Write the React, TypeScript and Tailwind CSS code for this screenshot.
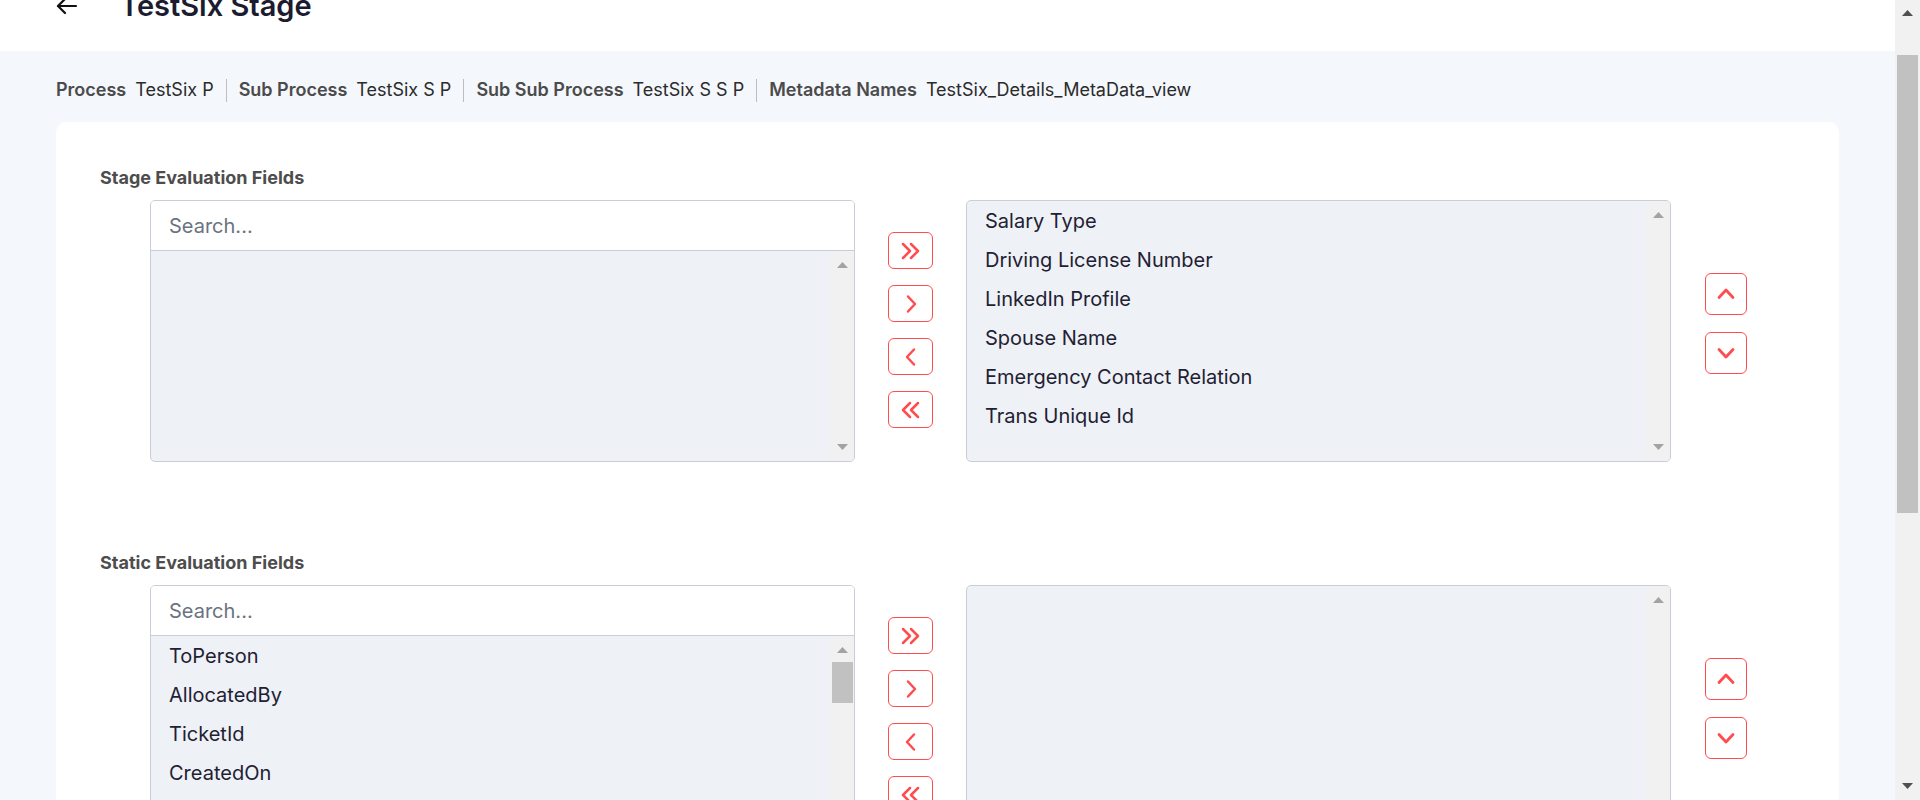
import { useState } from 'react'

const STAGE_SELECTED = [
  'Salary Type',
  'Driving License Number',
  'LinkedIn Profile',
  'Spouse Name',
  'Emergency Contact Relation',
  'Trans Unique Id',
]

const STATIC_AVAILABLE = ['ToPerson', 'AllocatedBy', 'TicketId', 'CreatedOn', 'ModifiedOn', 'Status']

const BREADCRUMB = [
  { label: 'Process', value: 'TestSix P' },
  { label: 'Sub Process', value: 'TestSix S P' },
  { label: 'Sub Sub Process', value: 'TestSix S S P' },
  { label: 'Metadata Names', value: 'TestSix_Details_MetaData_view' },
]

function Triangle({ up, dark }: { up?: boolean; dark?: boolean }) {
  return (
    <svg width="11" height="6" viewBox="0 0 11 6" className="shrink-0">
      <polygon points={up ? '5.5,0 11,6 0,6' : '0,0 11,0 5.5,6'} fill={dark ? '#505050' : '#a3a3a3'} />
    </svg>
  )
}

function ListScrollbar({ thumb }: { thumb?: boolean }) {
  return (
    <div className="w-[24px] shrink-0 bg-[#f1f1f1] flex flex-col items-center pt-[11px] pb-[11px]">
      <Triangle up />
      {thumb && <div className="mt-[9px] w-[21px] h-[41px] bg-[#c1c1c1] self-start ml-[2px]" />}
      <div className="flex-1" />
      <Triangle />
    </div>
  )
}

function Chevron({ dir }: { dir: 'right' | 'left' | 'rightDouble' | 'leftDouble' | 'up' | 'down' }) {
  const paths: Record<string, string[]> = {
    right: ['7,2.5 14,10 7,17.5'],
    left: ['13,2.5 6,10 13,17.5'],
    rightDouble: ['3,3 10,10 3,17', '11,3 18,10 11,17'],
    leftDouble: ['18,3 11,10 18,17', '10,3 3,10 10,17'],
    up: ['3,13.5 10,6 17,13.5'],
    down: ['3,6.5 10,14 17,6.5'],
  }
  const wide = dir === 'rightDouble' || dir === 'leftDouble'
  return (
    <svg width={wide ? 21 : 20} height="20" viewBox={wide ? '0 0 21 20' : '0 0 20 20'} fill="none">
      {paths[dir].map((p) => (
        <polyline key={p} points={p} stroke="#ff4d4f" strokeWidth={dir === 'up' || dir === 'down' ? 2.8 : 2.5} strokeLinecap="round" strokeLinejoin="round" />
      ))}
    </svg>
  )
}

function ListItems({ items }: { items: string[] }) {
  return (
    <div className="flex-1 min-w-0 overflow-hidden">
      {items.map((item) => (
        <div key={item} className="h-[39px] flex items-center px-[18px] text-[20px] text-[#1f2133] whitespace-nowrap">
          {item}
        </div>
      ))}
    </div>
  )
}

function DualList({ title, available, selected, thumb }: { title: string; available: string[]; selected: string[]; thumb?: boolean }) {
  const [query, setQuery] = useState('')
  const shown = available.filter((a) => a.toLowerCase().includes(query.toLowerCase()))

  return (
    <div>
      <div className="text-[18px] leading-[22px] font-bold text-[#4d4d4d]">{title}</div>
      <div className="flex items-center mt-[11px] pl-[50px]">
        <div className="w-[705px] h-[262px] shrink-0 border border-[#c8cdd8] rounded-[5px] overflow-hidden flex flex-col bg-[#eef1f6]">
          <input
            value={query}
            onChange={(e) => setQuery(e.target.value)}
            placeholder="Search..."
            className="h-[50px] shrink-0 bg-white border-b border-[#c8cdd8] px-[18px] text-[20px] text-[#1f2133] placeholder:text-[#6b7280] outline-none"
          />
          <div className="flex flex-1 min-h-0">
            <ListItems items={shown} />
            <ListScrollbar thumb={thumb} />
          </div>
        </div>

        <div className="flex flex-col gap-[16px] ml-[33px] -mt-[2px] shrink-0">
          {(['rightDouble', 'right', 'left', 'leftDouble'] as const).map((d) => (
            <button key={d} className="w-[45px] h-[37px] flex items-center justify-center bg-white border border-[#ff4d4f] rounded-[6px]">
              <Chevron dir={d} />
            </button>
          ))}
        </div>

        <div className="w-[705px] h-[262px] ml-[33px] shrink-0 border border-[#c8cdd8] rounded-[5px] overflow-hidden flex bg-[#eef1f6]">
          <ListItems items={selected} />
          <ListScrollbar />
        </div>

        <div className="flex flex-col gap-[17px] ml-[34px] self-start mt-[73px] shrink-0">
          {(['up', 'down'] as const).map((d) => (
            <button key={d} className="w-[42px] h-[42px] flex items-center justify-center bg-white border border-[#ff4d4f] rounded-[6px]">
              <Chevron dir={d} />
            </button>
          ))}
        </div>
      </div>
    </div>
  )
}

export default function App() {
  return (
    <div className="flex h-screen overflow-hidden bg-[#f4f7fc] font-['Inter',sans-serif]">
      <main className="flex-1 min-w-0 overflow-hidden">
        <div className="h-[51px] bg-white overflow-hidden">
          <div className="flex items-center h-[32px] -mt-[10px] pl-[55px]">
            <svg width="24" height="24" viewBox="0 0 24 24" fill="none" stroke="#111" strokeWidth="2.2" strokeLinecap="round" strokeLinejoin="round">
              <path d="M21 12H3" />
              <path d="M10 5 3 12l7 7" />
            </svg>
            <h1 className="ml-[41px] text-[29px] leading-[32px] font-semibold text-[#1c1c30]">TestSix Stage</h1>
          </div>
        </div>

        <div className="flex items-center px-[56px] pt-[27px] text-[18px] leading-[24px]">
          {BREADCRUMB.map((b, i) => (
            <div key={b.label} className="flex items-center">
              {i > 0 && <span className="w-px h-[23px] bg-[#bdbdbd] mx-[12px]" />}
              <span className="font-semibold text-[#4b4b4b]">{b.label}</span>
              <span className="ml-[9px] text-[#2b2b2b]">{b.value}</span>
            </div>
          ))}
        </div>

        <div className="mx-[56px] mt-[20px] bg-white rounded-[10px] px-[44px] pt-[45px] pb-[60px] flex flex-col gap-[90px]">
          <DualList title="Stage Evaluation Fields" available={[]} selected={STAGE_SELECTED} />
          <DualList title="Static Evaluation Fields" available={STATIC_AVAILABLE} selected={[]} thumb />
        </div>
      </main>

      <div className="w-[25px] shrink-0 bg-[#f1f1f1] flex flex-col items-center pt-[10px] pb-[11px]">
        <Triangle up dark />
        <div className="mt-[39px] w-[21px] h-[458px] bg-[#c1c1c1] self-start ml-[2px]" />
        <div className="flex-1" />
        <Triangle dark />
      </div>
    </div>
  )
}
